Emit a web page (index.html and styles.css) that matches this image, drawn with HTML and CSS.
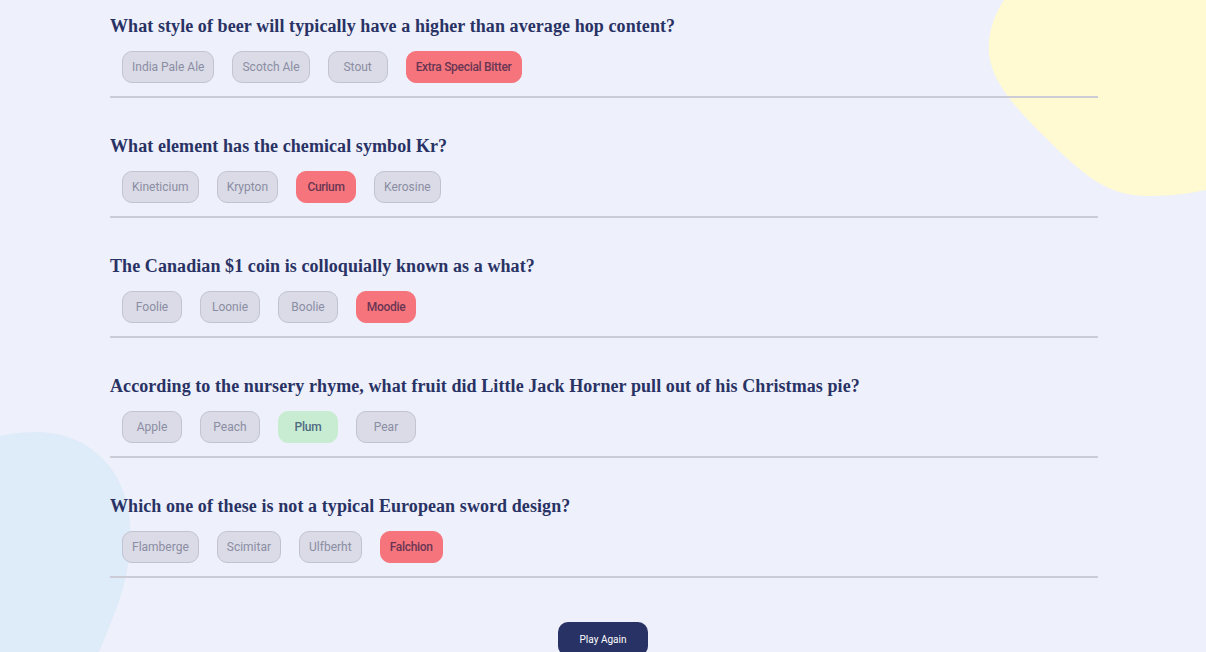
FILE: index.html
```html
<!DOCTYPE html>
<html>
<head>
<meta charset="utf-8">
<link rel="stylesheet" href="styles.css">
</head>
<body>
<svg class="blob blob-yellow" width="220" height="200" viewBox="0 0 220 200">
  <path d="M18 0 C6 18 0 40 4 60 C10 90 40 118 70 148 C100 176 122 196 162 196 C186 196 205 193 220 190 L220 0 Z" fill="#fffad1"/>
</svg>
<svg class="blob blob-blue" width="140" height="220" viewBox="0 0 140 220">
  <path d="M0 4 C12 1 25 0 40 0 C85 2 118 30 128 75 C134 110 128 150 113 185 C108 198 103 210 99 220 L0 220 Z" fill="#deebf8"/>
</svg>
<main class="quiz">
  <section class="question">
    <h2 class="q-title">What style of beer will typically have a higher than average hop content?</h2>
    <div class="answers">
      <span class="answer">India Pale Ale</span>
      <span class="answer">Scotch Ale</span>
      <span class="answer">Stout</span>
      <span class="answer wrong">Extra Special Bitter</span>
    </div>
  </section>
  <section class="question">
    <h2 class="q-title">What element has the chemical symbol Kr?</h2>
    <div class="answers">
      <span class="answer">Kineticium</span>
      <span class="answer">Krypton</span>
      <span class="answer wrong">Curium</span>
      <span class="answer">Kerosine</span>
    </div>
  </section>
  <section class="question">
    <h2 class="q-title">The Canadian $1 coin is colloquially known as a what?</h2>
    <div class="answers">
      <span class="answer">Foolie</span>
      <span class="answer">Loonie</span>
      <span class="answer">Boolie</span>
      <span class="answer wrong">Moodie</span>
    </div>
  </section>
  <section class="question">
    <h2 class="q-title">According to the nursery rhyme, what fruit did Little Jack Horner pull out of his Christmas pie?</h2>
    <div class="answers">
      <span class="answer">Apple</span>
      <span class="answer">Peach</span>
      <span class="answer correct">Plum</span>
      <span class="answer">Pear</span>
    </div>
  </section>
  <section class="question">
    <h2 class="q-title">Which one of these is not a typical European sword design?</h2>
    <div class="answers">
      <span class="answer">Flamberge</span>
      <span class="answer">Scimitar</span>
      <span class="answer">Ulfberht</span>
      <span class="answer wrong">Falchion</span>
    </div>
  </section>
  <div class="footer">
    <button class="play">Play Again</button>
  </div>
</main>
</body>
</html>
```
FILE: styles.css
```css
html, body {
  margin: 0;
  padding: 0;
}
body {
  background: #eef0fb;
  height: 652px;
  overflow: hidden;
  position: relative;
}
.blob {
  position: absolute;
  z-index: 0;
}
.blob-yellow {
  top: 0;
  right: 0;
}
.blob-blue {
  left: 0;
  bottom: 0;
  height: 220px;
}
.quiz {
  position: relative;
  z-index: 1;
  width: 988px;
  margin: 0 0 0 calc(50% - 493px);
  padding-top: 15px;
}
.question {
  border-bottom: 2px solid #cbccd6;
  padding-bottom: 13px;
  margin-bottom: 37px;
}
.q-title {
  margin: 0;
  font-family: "Liberation Serif", serif;
  font-weight: bold;
  font-size: 18px;
  line-height: 22px;
  letter-spacing: 0.08px;
  color: #293264;
}
.answers {
  display: flex;
  gap: 18px;
  margin-top: 14px;
  padding-left: 12px;
}
.answer {
  box-sizing: border-box;
  height: 32px;
  min-width: 60px;
  display: flex;
  align-items: center;
  justify-content: center;
  padding: 0 9px;
  border: 1px solid #c2c3d2;
  border-radius: 10px;
  background: #dadbe6;
  font-family: Roboto, "Liberation Sans", sans-serif;
  font-size: 12px;
  color: #8b8da3;
}
.answer.wrong {
  background: #f6757c;
  border-color: #f6757c;
  color: #6a3553;
  font-weight: 500;
  letter-spacing: -0.3px;
}
.answer.correct {
  background: #c8ecd1;
  border-color: #c8ecd1;
  color: #4e6a82;
  font-weight: 500;
  letter-spacing: -0.2px;
}
.footer {
  display: flex;
  justify-content: center;
  margin-top: 44px;
  padding-right: 2px;
}
.play {
  width: 90px;
  height: 34px;
  border: none;
  border-radius: 10px;
  background: #293264;
  color: #ffffff;
  font-family: Roboto, "Liberation Sans", sans-serif;
  font-size: 10px;
  padding: 0;
}
```
